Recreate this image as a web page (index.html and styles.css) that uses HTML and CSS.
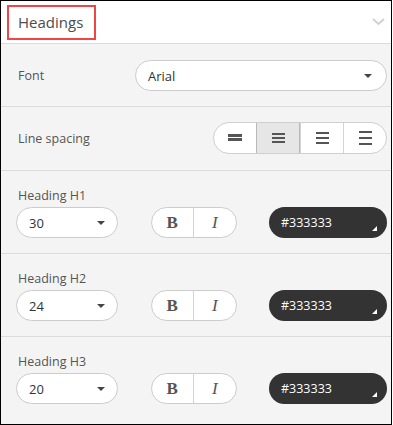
FILE: index.html
```html
<!DOCTYPE html>
<html lang="en">
<head>
    <meta charset="UTF-8">
    <meta name="viewport" content="width=device-width, initial-scale=1.0">
    <title>Headings | Theme settings</title>
    <link rel="stylesheet" href="styles.css">
</head>
<body>

    <div class="panel">
        <div class="panel-head">
            <span class="panel-title">Headings</span>
            <svg class="chevron" width="13" height="7" viewBox="0 0 13 7"><path d="M1 1 L6.5 6 L12 1" fill="none" stroke="#cfcfcf" stroke-width="1.8"/></svg>
        </div>

        <div class="row row-inline">
            <span class="label">Font</span>
            <div class="select select-wide"><span>Arial</span><i class="caret"></i></div>
        </div>

        <div class="row row-inline row-spacing">
            <span class="label">Line spacing</span>
            <div class="seg">
                <div class="seg-btn">
                    <svg width="14" height="8" viewBox="0 0 14 8"><rect x="0" y="0" width="14" height="3" fill="#555"/><rect x="0" y="4" width="14" height="3" fill="#555"/></svg>
                </div>
                <div class="seg-btn active">
                    <svg width="13" height="10" viewBox="0 0 13 10"><rect y="0" width="13" height="2" fill="#555"/><rect y="4" width="13" height="2" fill="#555"/><rect y="8" width="13" height="2" fill="#555"/></svg>
                </div>
                <div class="seg-btn">
                    <svg width="13" height="12" viewBox="0 0 13 12"><rect y="0" width="13" height="2" fill="#555"/><rect y="5" width="13" height="2" fill="#555"/><rect y="10" width="13" height="2" fill="#555"/></svg>
                </div>
                <div class="seg-btn">
                    <svg width="13" height="14" viewBox="0 0 13 14"><rect y="0" width="13" height="2" fill="#555"/><rect y="6" width="13" height="2" fill="#555"/><rect y="12" width="13" height="2" fill="#555"/></svg>
                </div>
            </div>
        </div>

        <div class="row heading-row">
            <div class="label">Heading H1</div>
            <div class="controls">
                <div class="select select-size"><span>30</span><i class="caret"></i></div>
                <div class="style-group"><span class="style-btn bold">B</span><span class="style-btn italic">I</span></div>
                <div class="color-pill"><span>#333333</span><i class="grip"></i></div>
            </div>
        </div>

        <div class="row heading-row">
            <div class="label">Heading H2</div>
            <div class="controls">
                <div class="select select-size"><span>24</span><i class="caret"></i></div>
                <div class="style-group"><span class="style-btn bold">B</span><span class="style-btn italic">I</span></div>
                <div class="color-pill"><span>#333333</span><i class="grip"></i></div>
            </div>
        </div>

        <div class="row heading-row last">
            <div class="label">Heading H3</div>
            <div class="controls">
                <div class="select select-size"><span>20</span><i class="caret"></i></div>
                <div class="style-group"><span class="style-btn bold">B</span><span class="style-btn italic">I</span></div>
                <div class="color-pill"><span>#333333</span><i class="grip"></i></div>
            </div>
        </div>
    </div>

</body>
</html>
```

FILE: styles.css
```css
body {
    margin: 0;
    font-family: "Open Sans", Arial, sans-serif;
    background: #fff;
}
.panel {
    width: 392px;
    height: 425px;
    box-sizing: border-box;
    border: 1px solid #000;
    background: #f4f4f4;
    overflow: hidden;
}
.panel-head {
    height: 42px;
    display: flex;
    align-items: center;
    justify-content: space-between;
    padding: 0 6px 0 6px;
    background: #fff;
    border-bottom: 1px solid #dcdcdc;
}
.panel-title {
    width: 89px;
    height: 35px;
    box-sizing: border-box;
    display: flex;
    align-items: center;
    padding-left: 9px;
    border: 2px solid #f04545;
    font-size: 15px;
    color: #4d4d4d;
}
.chevron {
    margin-top: -2px;
}
.row {
    padding: 0 4px 0 15px;
    border-bottom: 1px solid #dcdcdc;
}
.row.last {
    border-bottom: none;
}
.row-inline {
    display: flex;
    align-items: center;
    justify-content: space-between;
    padding-top: 16px;
    padding-bottom: 15px;
}
.row-spacing {
    padding-top: 15px;
    padding-bottom: 16px;
}
.label {
    margin-left: 2px;
    font-size: 12.5px;
    color: #555;
}
.select {
    height: 31px;
    box-sizing: border-box;
    display: flex;
    align-items: center;
    justify-content: space-between;
    background: #fff;
    border: 1px solid #cccccc;
    border-radius: 16px;
    font-size: 13px;
    color: #333;
}
.select-wide {
    width: 252px;
    padding: 0 14px 0 12px;
}
.select-size {
    width: 102px;
    padding: 0 12px 0 12px;
}
.caret {
    width: 0;
    height: 0;
    border-left: 4px solid transparent;
    border-right: 4px solid transparent;
    border-top: 4px solid #444;
}
.seg {
    width: 174px;
    height: 32px;
    box-sizing: border-box;
    display: flex;
    background: #fff;
    border: 1px solid #cfcfcf;
    border-radius: 16px;
    overflow: hidden;
}
.seg-btn {
    flex: 1;
    display: flex;
    align-items: center;
    justify-content: center;
    border-left: 1px solid #d4d4d4;
}
.seg-btn:first-child {
    border-left: none;
}
.seg-btn.active {
    background: #e6e6e6;
    border: 1px solid #b9b9b9;
    margin: -1px 0;
}
.heading-row {
    padding-top: 16px;
    padding-bottom: 15px;
}
.heading-row .label {
    line-height: 18px;
    margin-bottom: 2px;
}
.controls {
    display: flex;
    justify-content: space-between;
    align-items: center;
}
.style-group {
    width: 86px;
    height: 31px;
    box-sizing: border-box;
    display: flex;
    background: #fff;
    border: 1px solid #cccccc;
    border-radius: 16px;
}
.style-btn {
    flex: 1;
    display: flex;
    align-items: center;
    justify-content: center;
    font-family: "Liberation Serif", "Times New Roman", serif;
    font-size: 17px;
    color: #555;
}
.style-btn.italic {
    font-style: italic;
    border-left: 1px solid #d4d4d4;
}
.style-btn.bold {
    font-weight: bold;
}
.color-pill {
    position: relative;
    width: 118px;
    height: 31px;
    box-sizing: border-box;
    display: flex;
    align-items: center;
    padding-left: 12px;
    background: #333;
    border-radius: 16px;
    font-size: 12.5px;
    color: #fff;
}
.grip {
    position: absolute;
    right: 10px;
    bottom: 7px;
    width: 0;
    height: 0;
    border-left: 5px solid transparent;
    border-bottom: 5px solid #fff;
}
```
